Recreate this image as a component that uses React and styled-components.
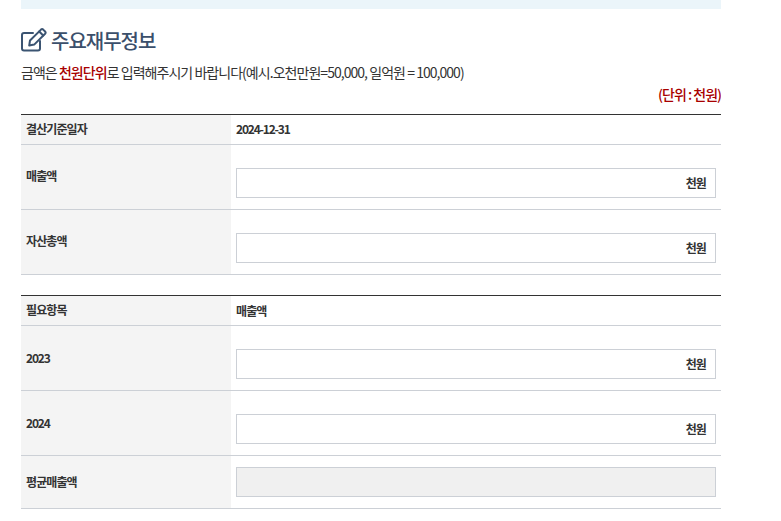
import React from "react";
import styled, { createGlobalStyle } from "styled-components";

const GlobalStyle = createGlobalStyle`
  body {
    margin: 0;
    background: #fff;
    font-family: "Noto Sans CJK KR", "Noto Sans", sans-serif;
    color: #333;
  }
`;

const Page = styled.div`
  width: 700px;
  margin-left: 21px;
  height: 521px;
  overflow: hidden;
`;

const TopBand = styled.div`
  height: 9px;
  background: #ebf5fa;
`;

const Heading = styled.h2`
  display: flex;
  align-items: center;
  gap: 4px;
  height: 32px;
  margin: 15px 0 0;
  font-size: 20px;
  font-weight: 500;
  letter-spacing: -1px;
  color: #3b4f6b;
`;

const Notice = styled.p`
  margin: 6px 0 0;
  height: 20px;
  line-height: 20px;
  font-size: 14px;
  letter-spacing: -0.96px;
  color: #333;
`;

const Red = styled.strong`
  font-weight: 500;
  color: #a80000;
`;

const Unit = styled.p`
  margin: 2px 0 0;
  height: 20px;
  line-height: 20px;
  text-align: right;
  font-size: 14px;
  font-weight: 500;
  letter-spacing: -1px;
  color: #a80000;
`;

const Table = styled.div`
  display: grid;
  grid-template-columns: 210px 1fr;
  border-top: 1px solid #333;
  margin-top: ${(p) => p.$top}px;
`;

const Label = styled.div`
  display: flex;
  align-items: center;
  height: ${(p) => p.$h}px;
  padding: 0 0 ${(p) => p.$shift || 0}px 5px;
  box-sizing: border-box;
  background: #f4f4f4;
  border-bottom: 1px solid #ccd0d6;
  font-size: 12px;
  font-weight: 700;
  letter-spacing: ${(p) => (p.$tight ? "-1.2px" : "-0.9px")};
  color: #333;
`;

const Value = styled.div`
  display: flex;
  align-items: ${(p) => (p.$bottom ? "flex-end" : "center")};
  height: ${(p) => p.$h}px;
  padding: 0 5px ${(p) => p.$shift || 0}px;
  box-sizing: border-box;
  border-bottom: 1px solid #ccd0d6;
  font-size: 12px;
  font-weight: 700;
  letter-spacing: ${(p) => (p.$tight ? "-1.2px" : "-0.9px")};
  color: #333;
`;

const Field = styled.div`
  flex: 1;
  height: 30px;
  box-sizing: border-box;
  display: flex;
  align-items: center;
  justify-content: flex-end;
  padding: 0 9px 2px 0;
  border: 1px solid #ccd0d6;
  background: ${(p) => (p.$disabled ? "#f0f0f0" : "#fff")};
`;

const EditIcon = () => (
  <svg width="26" height="24" viewBox="0 0 26 24" fill="none" stroke="#3b5472" strokeWidth="2" strokeLinejoin="round" strokeLinecap="round">
    <path d="M19 13v7.5a2 2 0 0 1-2 2H3a2 2 0 0 1-2-2V7a2 2 0 0 1 2-2h9" />
    <path d="M9 12.5 20 1.6a1.6 1.6 0 0 1 2.2 0l1.9 1.9a1.6 1.6 0 0 1 0 2.2L13.2 16.6l-5 1z" />
    <path d="M18.2 3.5l4 4" />
  </svg>
);

const InputRow = ({ label, shift = 4, tight }) => (
  <>
    <Label $h={65} $shift={shift} $tight={tight}>{label}</Label>
    <Value $h={65} $bottom $shift={11}>
      <Field>천원</Field>
    </Value>
  </>
);

export default function App() {
  return (
    <Page>
      <GlobalStyle />
      <TopBand />
      <Heading>
        <EditIcon />
        주요재무정보
      </Heading>
      <Notice>
        금액은 <Red>천원단위</Red>로 입력해주시기 바랍니다(예시.오천만원=50,000, 일억원 = 100,000)
      </Notice>
      <Unit>(단위 : 천원)</Unit>

      <Table $top={10}>
        <Label $h={30} $shift={2}>결산기준일자</Label>
        <Value $h={30} $shift={2} $tight>2024-12-31</Value>
        <InputRow label="매출액" />
        <InputRow label="자산총액" />
      </Table>

      <Table $top={20}>
        <Label $h={30} $shift={2}>필요항목</Label>
        <Value $h={30}>매출액</Value>
        <InputRow label="2023" shift={2} tight />
        <InputRow label="2024" shift={2} tight />
        <Label $h={53} $shift={2}>평균매출액</Label>
        <Value $h={53}>
          <Field $disabled />
        </Value>
      </Table>
    </Page>
  );
}
